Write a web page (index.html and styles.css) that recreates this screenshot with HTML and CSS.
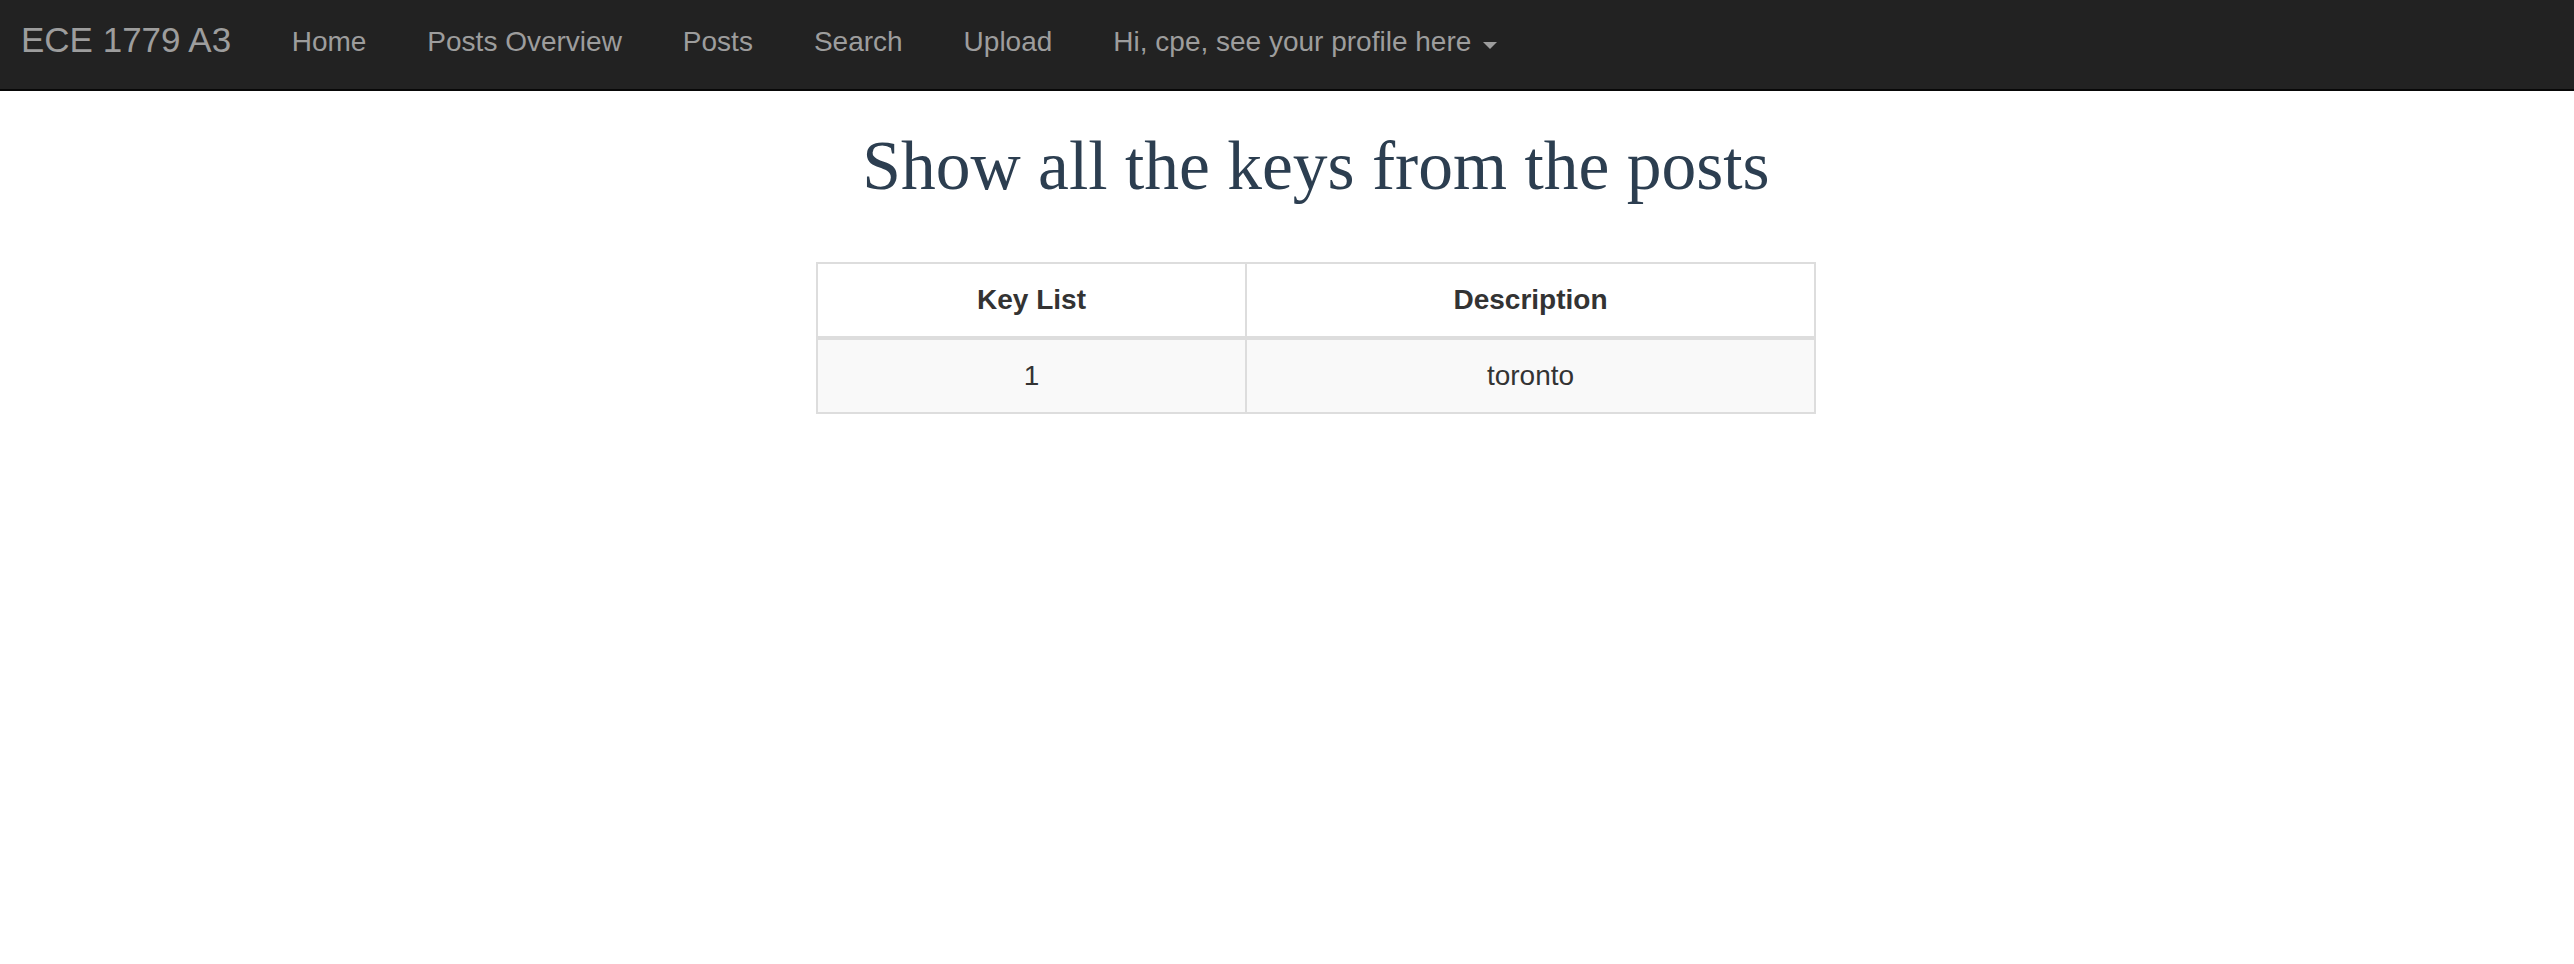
FILE: index.html
```html
<!DOCTYPE html>
<html lang="en">
<head>
<meta charset="utf-8">
<title>ECE 1779 A3</title>
<link rel="stylesheet" href="styles.css">
</head>
<body>
<nav class="navbar">
  <a class="brand" href="#">ECE 1779 A3</a>
  <ul class="nav">
    <li><a href="#">Home</a></li>
    <li><a href="#">Posts Overview</a></li>
    <li><a href="#">Posts</a></li>
    <li><a href="#">Search</a></li>
    <li><a href="#">Upload</a></li>
    <li><a href="#">Hi, cpe, see your profile here<span class="caret"></span></a></li>
  </ul>
</nav>
<main class="main">
  <h1 class="title">Show all the keys from the posts</h1>
  <table class="keys">
    <thead>
      <tr><th class="col-key">Key List</th><th>Description</th></tr>
    </thead>
    <tbody>
      <tr><td>1</td><td>toronto</td></tr>
    </tbody>
  </table>
</main>
</body>
</html>
```
FILE: styles.css
```css
html, body {
  margin: 0;
  padding: 0;
  background: #fff;
  font-family: "Liberation Sans", Arial, sans-serif;
  color: #333;
}

.navbar {
  display: flex;
  align-items: flex-start;
  height: 89px;
  background: #222;
  border-bottom: 2px solid #080808;
}

.brand {
  display: block;
  padding: 20px 30px 0 21px;
  font-size: 35px;
  line-height: 39px;
  color: #9d9d9d;
  text-decoration: none;
}

.nav {
  display: flex;
  margin: 0;
  padding: 0;
  list-style: none;
}

.nav a {
  display: flex;
  align-items: center;
  padding: 26px 30.5px 0;
  font-size: 28px;
  line-height: 32px;
  color: #9d9d9d;
  text-decoration: none;
}

.caret {
  display: inline-block;
  width: 0;
  height: 0;
  margin-left: 12px;
  margin-top: 6px;
  border-top: 7px solid #9d9d9d;
  border-left: 7.5px solid transparent;
  border-right: 7.5px solid transparent;
}

.main {
  display: flex;
  flex-direction: column;
  align-items: center;
  padding-left: 58px;
}

.title {
  margin: 35px 0 56px;
  font-family: "Liberation Serif", "Times New Roman", serif;
  font-weight: normal;
  font-size: 69.5px;
  line-height: 80px;
  color: #2c3e50;
}

.keys {
  width: 1000px;
  border-collapse: collapse;
  font-size: 28px;
  color: #333;
}

.keys th,
.keys td {
  border: 2px solid #ddd;
  padding: 16px;
  line-height: 40px;
  text-align: center;
}

.keys th {
  font-weight: bold;
  border-bottom-width: 4px;
  background: #fff;
}

.keys td {
  background: #f9f9f9;
  font-weight: normal;
}

.col-key {
  width: 429px;
  box-sizing: border-box;
}
```
